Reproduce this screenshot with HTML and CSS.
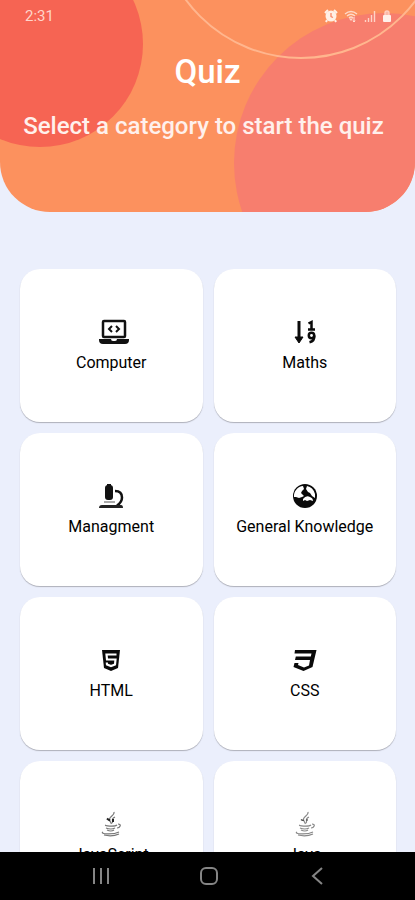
FILE: index.html
```html
<!DOCTYPE html>
<html lang="en">
<head>
<meta charset="utf-8">
<meta name="viewport" content="width=device-width, initial-scale=1">
<title>Quiz</title>
<link rel="stylesheet" href="styles.css">
</head>
<body>
<div class="app">
  <header class="hero">
    <svg class="hero-art" viewBox="0 0 415 212" preserveAspectRatio="xMidYMid slice" aria-hidden="true">
      <circle cx="40" cy="44" r="103" fill="#f66453"/>
      <circle cx="384" cy="163" r="150" fill="#f77e6e"/>
      <circle cx="301" cy="-85" r="143" fill="none" stroke="#ffb68e" stroke-width="2"/>
    </svg>
    <div class="status">
      <span class="clock">2:31</span>
      <div class="status-icons">
        <svg width="14" height="14" viewBox="0 0 14 14" aria-hidden="true">
          <path d="M1 4 4 1M10 1l3 3M3 11l-1 2M11 11l1 2" stroke="#fff0e6" stroke-width="2"/>
          <circle cx="7" cy="7" r="5.500" fill="#fff0e6"/>
          <path d="M7 4v3.500l2 1" fill="none" stroke="#f98768" stroke-width="1.300"/>
        </svg>
        <svg width="14" height="14" viewBox="0 0 14 14" aria-hidden="true">
          <path d="M1 5q6-5 12 0M3 7q4-3.500 8 0M5 9q2-2 4 0" fill="none" stroke="#ffd9c8" stroke-width="1.400"/>
          <path d="M7 12 5 9.500h4z" fill="#ffd9c8"/>
          <path d="M10 8v5M9 11.500l1 1.500 1-1.500" fill="none" stroke="#ffe6da"/>
        </svg>
        <svg width="12" height="14" viewBox="0 0 12 14" aria-hidden="true">
          <path d="M1.500 11v2M4.500 9v4M7.500 6v7M10.500 2v11" stroke="#ffd3c6" stroke-width="1.400"/>
        </svg>
        <svg width="10" height="14" viewBox="0 0 10 14" aria-hidden="true">
          <path d="M3 7V4q0-2 2-2t2 2v3" fill="#fbb9a8" stroke="#ffcfc2" stroke-width="1.400"/>
          <rect x="1" y="6" width="8" height="7" rx="1" fill="#fff0ea"/>
        </svg>
      </div>
    </div>
    <h1 class="title">Quiz</h1>
    <p class="subtitle">Select a category to start the quiz</p>
  </header>

  <main class="categories">
    <button class="card" type="button">
      <svg class="icon" viewBox="-3 0 36 26" aria-hidden="true">
        <g transform="translate(3 0)">
          <rect x="4" y="2" width="22" height="16" rx="1" fill="none" stroke="#111" stroke-width="2.500"/>
          <path d="m13 7-3 3 3 3M17 7l3 3-3 3" fill="none" stroke="#111" stroke-width="2"/>
          <path d="M0 20h12q0 2 2 2h2q2 0 2-2h12v1q0 4-4 4H4q-4 0-4-4z" fill="#111"/>
        </g>
      </svg>
      <span class="label">Computer</span>
    </button>
    <button class="card" type="button">
      <svg class="icon" viewBox="-3 0 36 26" aria-hidden="true">
        <g transform="translate(2 0)">
          <path d="M7 2v19" stroke="#0a0a0a" stroke-width="3"/>
          <path d="M3 18h8l-4 6z" fill="#0a0a0a" stroke="#0a0a0a" stroke-linejoin="round"/>
          <path d="M16.500 4.500 19.500 3v7M16 10.500h7" fill="none" stroke="#0a0a0a" stroke-width="2.500"/>
          <circle cx="19.500" cy="16.500" r="2.700" fill="none" stroke="#0a0a0a" stroke-width="2.500"/>
          <path d="M22.300 16.500q.5 5.500-4.800 6.800" fill="none" stroke="#0a0a0a" stroke-width="2.500"/>
        </g>
      </svg>
      <span class="label">Maths</span>
    </button>
    <button class="card" type="button">
      <svg class="icon" viewBox="-3 0 36 26" aria-hidden="true">
        <g transform="translate(3 0)">
          <rect x="6" y="2" width="8" height="15" rx="3" fill="#111"/>
          <path d="M8 1h4v3H8z" fill="#111"/>
          <path d="M16 8c5 0 7 3 7 6.500 0 4-2 6-5 8" fill="none" stroke="#111" stroke-width="2.500"/>
          <path d="M5 19h11" stroke="#aaa" stroke-width="2"/>
          <path d="M3 22h19q2 0 2 3H0q0-3 3-3z" fill="#222"/>
        </g>
      </svg>
      <span class="label">Managment</span>
    </button>
    <button class="card" type="button">
      <svg class="icon" viewBox="-3 0 36 26" aria-hidden="true">
        <circle cx="15" cy="13" r="12" fill="#0a0a0a"/>
        <path d="M4 14C3.500 8 8 3.500 13 3l1 3-2 2-1 2 3 3-2 1-3 1-3-1zM17 3q6 1 8 8v4l-3-2-2-3-2-1-2-3zM13 16q3-4 7-2 3 1 3 4l-3-1-3 1-2-1-2 1z" fill="#fff"/>
      </svg>
      <span class="label">General Knowledge</span>
    </button>
    <button class="card" type="button">
      <svg class="icon" viewBox="-3 0 36 26" aria-hidden="true">
        <path d="M6 3h18l-2 18-7 3-7-3z" fill="#0a0a0a"/>
        <path d="M20.500 7.500h-10l.5 5h8.500l-.5 5-4 1.500-4-1.500-.2-2" fill="none" stroke="#fff" stroke-width="2.200"/>
      </svg>
      <span class="label">HTML</span>
    </button>
    <button class="card" type="button">
      <svg class="icon" viewBox="-3 0 36 26" aria-hidden="true">
        <path d="M5 3h21.500l-4 17-9 4-10-4 1-4h4l-.5 2 6 2.500 5-2L20 13H5l.8-3.500h15L21.500 6.500H4.500z" fill="#0a0a0a"/>
      </svg>
      <span class="label">CSS</span>
    </button>
    <button class="card" type="button">
      <svg class="icon" viewBox="-3 0 36 26" aria-hidden="true">
        <g fill="none" stroke="#777" stroke-width="1.200">
          <path d="M18 1c1 4-7 5-4 9l1.500 3M19 6c-5 2-1 4-3 6"/>
          <path d="M11 7.500q1 1 3 2M17 8v3" stroke="#222" stroke-width="2"/>
          <path d="M10 14c-3 1 9 2 11 0M10 17q5 2 9 0M11 19q4 2 7 0M22 13c4 0 2 4-1 4M7 21c-4 2 10 3 16 0M8 24q8 2 15-1"/>
        </g>
      </svg>
      <span class="label">JavaScript</span>
    </button>
    <button class="card" type="button">
      <svg class="icon" viewBox="-3 0 36 26" aria-hidden="true">
        <g fill="none" stroke="#888" stroke-width="1.200">
          <path d="M18 1c1 4-7 5-4 9l1.500 3M19 6c-5 2-1 4-3 6"/>
          <path d="M11 8.500q1 1 3 1M17 8v2" stroke="#555"/>
          <path d="M10 14c-3 1 9 2 11 0M10 17q5 2 9 0M11 19q4 2 7 0M22 13c4 0 2 4-1 4M7 21c-4 2 10 3 16 0M8 24q8 2 15-1"/>
        </g>
      </svg>
      <span class="label">Java</span>
    </button>
  </main>

  <nav class="navbar" aria-label="System">
    <button class="nav-button" type="button" aria-label="Recent apps">
      <svg width="20" height="20" viewBox="0 0 20 20"><path d="M3 2v16M10 2v16M17 2v16" stroke="#858585" stroke-width="2"/></svg>
    </button>
    <button class="nav-button" type="button" aria-label="Home">
      <svg width="20" height="20" viewBox="0 0 20 20"><rect x="2" y="2" width="16" height="16" rx="5" fill="none" stroke="#858585" stroke-width="2"/></svg>
    </button>
    <button class="nav-button" type="button" aria-label="Back">
      <svg width="20" height="20" viewBox="0 0 20 20"><path d="m15 2-9 8 9 8" fill="none" stroke="#858585" stroke-width="2"/></svg>
    </button>
  </nav>
</div>
</body>
</html>
```
FILE: styles.css
```css
* {
  box-sizing: border-box;
}

body {
  margin: 0;
  font-family: Roboto, "Liberation Sans", sans-serif;
  background: #ebeffc;
}

.app {
  display: flex;
  flex-direction: column;
  height: 100vh;
  overflow: hidden;
}

.hero {
  position: relative;
  flex: none;
  overflow: hidden;
  padding-bottom: 72px;
  border-radius: 0 0 50px 50px;
  background: #fc915e;
  color: #fff;
  text-align: center;
}

.hero-art {
  position: absolute;
  inset: 0;
  width: 100%;
  height: 100%;
}

.status,
.title,
.subtitle {
  position: relative;
}

.status {
  display: flex;
  align-items: center;
  justify-content: space-between;
  height: 32px;
  padding: 0 23px 0 25px;
}

.clock {
  font-size: 15px;
  color: #ffd5ca;
}

.status-icons {
  display: flex;
  gap: 6px;
}

.title {
  margin: 20px 0 0;
  font-size: 33px;
  font-weight: 500;
  line-height: 40px;
}

.subtitle {
  margin: 20px 0 0;
  padding-right: 8px;
  font-size: 24px;
  font-weight: 500;
  line-height: 28px;
  color: #fff0ec;
  white-space: nowrap;
}

.categories {
  flex: 1;
  min-height: 0;
  display: grid;
  grid-template-columns: 1fr 1fr;
  grid-auto-rows: 153px;
  gap: 11px;
  padding: 57px 19px 0 20px;
  overflow: hidden;
}

.card {
  display: flex;
  flex-direction: column;
  align-items: center;
  justify-content: center;
  gap: 8px;
  padding: 0;
  border: 0;
  border-radius: 20px;
  background: #fff;
  box-shadow: 0 1px 1px #aeb0ba;
  font-family: inherit;
  color: #000;
}

.icon {
  width: 36px;
  height: 26px;
}

.label {
  font-size: 16px;
  font-weight: 400;
  line-height: 20px;
}

.navbar {
  flex: none;
  display: flex;
  justify-content: center;
  gap: 60px;
  height: 48px;
  padding-left: 2px;
  background: #000;
}

.nav-button {
  display: grid;
  place-items: center;
  width: 48px;
  padding: 0;
  border: 0;
  background: none;
}
```
